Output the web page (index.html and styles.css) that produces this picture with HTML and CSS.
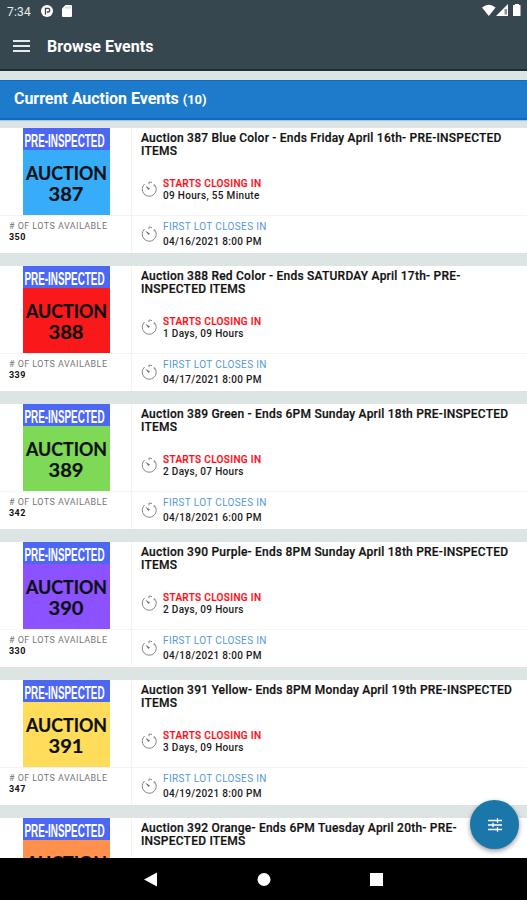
FILE: index.html
```html
<!DOCTYPE html>
<html lang="en">
<head>
<meta charset="utf-8">
<title>Browse Events</title>
<link rel="stylesheet" href="styles.css">
</head>
<body>
<svg class="defs" aria-hidden="true">
  <symbol id="timer" viewBox="0 0 16 16">
    <path d="M3.600 3A7 7 0 1 0 13.400 3.500M13.200 3.500V5.500M8 1V3.200M8 1A7 7 0 0 1 11 1.700" fill="none" stroke="#858585" stroke-width="1"/>
    <path d="M4.300 4.800 9 7.400 7.400 9Z" fill="#6f6f6f"/>
  </symbol>
</svg>
<div class="screen">
  <header class="top">
    <div class="status">
      <span class="time">7:34</span>
      <svg class="st-app" viewBox="0 0 12 12"><circle cx="6" cy="6" r="6" fill="#fff"/><path d="M4.500 9.600V3.400H7A1.800 1.800 0 0 1 7 7H6" fill="none" stroke="#37474f" stroke-width="1.300"/></svg>
      <svg class="st-sd" viewBox="0 0 10 12"><path d="M3.500 0H9Q10 0 10 1V11Q10 12 9 12H1Q0 12 0 11V3.600Z" fill="#fff"/><path d="M4 1.600V3.600M6 1.600V3.600M8 1.600V3.600" stroke="#9aa3a8" stroke-width=".8"/></svg>
      <span class="spacer"></span>
      <svg class="st-net" viewBox="0 0 42 14"><path d="M0 3.600Q6.800-2 13.600 3.600L6.800 12Z" fill="#fff"/><path d="M14 12 26 0V12Z" fill="#fff"/><path d="M22.500 5H25V10.500H22.500Z" fill="#89939a"/><path d="M33 0H37V1H38.500V12H31V1H33Z" fill="#fff"/></svg>
    </div>
    <div class="bar">
      <span class="menu"><i></i><i></i><i></i></span>
      <h1>Browse Events</h1>
    </div>
  </header>
  <div class="section"><h2>Current Auction Events <small>(10)</small></h2></div>
  <main class="list">
    <article class="card">
      <div class="thumb blue"><svg viewBox="0 0 87 87"><text class="pre" x="1.500" y="19.300" textLength="80" lengthAdjust="spacingAndGlyphs">PRE-INSPECTED</text><text class="auc" x="3" y="52" textLength="81" lengthAdjust="spacingAndGlyphs">AUCTION</text><text class="num" x="25.500" y="73" textLength="35" lengthAdjust="spacingAndGlyphs">387</text></svg></div>
      <div class="info"><h3>Auction 387 Blue Color - Ends Friday April 16th- PRE-INSPECTED<br>ITEMS</h3><div class="when"><svg><use href="#timer"/></svg><p><b class="red">STARTS CLOSING IN</b><span class="left">09 Hours, 55 Minute</span></p></div></div>
      <div class="lots"><span>#&nbsp;OF LOTS AVAILABLE</span><b>350</b></div>
      <div class="closes"><svg><use href="#timer"/></svg><p><span class="first">FIRST LOT CLOSES IN</span><span class="date">04/16/2021 8:00 PM</span></p></div>
    </article>
    <article class="card">
      <div class="thumb crimson"><svg viewBox="0 0 87 87"><text class="pre" x="1.500" y="19.300" textLength="80" lengthAdjust="spacingAndGlyphs">PRE-INSPECTED</text><text class="auc" x="3" y="52" textLength="81" lengthAdjust="spacingAndGlyphs">AUCTION</text><text class="num" x="25.500" y="73" textLength="35" lengthAdjust="spacingAndGlyphs">388</text></svg></div>
      <div class="info"><h3>Auction 388 Red Color - Ends SATURDAY April 17th- PRE-<br>INSPECTED ITEMS</h3><div class="when"><svg><use href="#timer"/></svg><p><b class="red">STARTS CLOSING IN</b><span class="left">1 Days, 09 Hours</span></p></div></div>
      <div class="lots"><span>#&nbsp;OF LOTS AVAILABLE</span><b>339</b></div>
      <div class="closes"><svg><use href="#timer"/></svg><p><span class="first">FIRST LOT CLOSES IN</span><span class="date">04/17/2021 8:00 PM</span></p></div>
    </article>
    <article class="card">
      <div class="thumb green"><svg viewBox="0 0 87 87"><text class="pre" x="1.500" y="19.300" textLength="80" lengthAdjust="spacingAndGlyphs">PRE-INSPECTED</text><text class="auc" x="3" y="52" textLength="81" lengthAdjust="spacingAndGlyphs">AUCTION</text><text class="num" x="25.500" y="73" textLength="35" lengthAdjust="spacingAndGlyphs">389</text></svg></div>
      <div class="info"><h3>Auction 389 Green - Ends 6PM Sunday April 18th PRE-INSPECTED<br>ITEMS</h3><div class="when"><svg><use href="#timer"/></svg><p><b class="red">STARTS CLOSING IN</b><span class="left">2 Days, 07 Hours</span></p></div></div>
      <div class="lots"><span>#&nbsp;OF LOTS AVAILABLE</span><b>342</b></div>
      <div class="closes"><svg><use href="#timer"/></svg><p><span class="first">FIRST LOT CLOSES IN</span><span class="date">04/18/2021 6:00 PM</span></p></div>
    </article>
    <article class="card">
      <div class="thumb purple"><svg viewBox="0 0 87 87"><text class="pre" x="1.500" y="19.300" textLength="80" lengthAdjust="spacingAndGlyphs">PRE-INSPECTED</text><text class="auc" x="3" y="52" textLength="81" lengthAdjust="spacingAndGlyphs">AUCTION</text><text class="num" x="25.500" y="73" textLength="35" lengthAdjust="spacingAndGlyphs">390</text></svg></div>
      <div class="info"><h3>Auction 390 Purple- Ends 8PM Sunday April 18th PRE-INSPECTED<br>ITEMS</h3><div class="when"><svg><use href="#timer"/></svg><p><b class="red">STARTS CLOSING IN</b><span class="left">2 Days, 09 Hours</span></p></div></div>
      <div class="lots"><span>#&nbsp;OF LOTS AVAILABLE</span><b>330</b></div>
      <div class="closes"><svg><use href="#timer"/></svg><p><span class="first">FIRST LOT CLOSES IN</span><span class="date">04/18/2021 8:00 PM</span></p></div>
    </article>
    <article class="card">
      <div class="thumb yellow"><svg viewBox="0 0 87 87"><text class="pre" x="1.500" y="19.300" textLength="80" lengthAdjust="spacingAndGlyphs">PRE-INSPECTED</text><text class="auc" x="3" y="52" textLength="81" lengthAdjust="spacingAndGlyphs">AUCTION</text><text class="num" x="25.500" y="73" textLength="35" lengthAdjust="spacingAndGlyphs">391</text></svg></div>
      <div class="info"><h3>Auction 391 Yellow- Ends 8PM Monday April 19th PRE-INSPECTED<br>ITEMS</h3><div class="when"><svg><use href="#timer"/></svg><p><b class="red">STARTS CLOSING IN</b><span class="left">3 Days, 09 Hours</span></p></div></div>
      <div class="lots"><span>#&nbsp;OF LOTS AVAILABLE</span><b>347</b></div>
      <div class="closes"><svg><use href="#timer"/></svg><p><span class="first">FIRST LOT CLOSES IN</span><span class="date">04/19/2021 8:00 PM</span></p></div>
    </article>
    <article class="card">
      <div class="thumb orange"><svg viewBox="0 0 87 87"><text class="pre" x="1.500" y="19.300" textLength="80" lengthAdjust="spacingAndGlyphs">PRE-INSPECTED</text><text class="auc" x="3" y="52" textLength="81" lengthAdjust="spacingAndGlyphs">AUCTION</text></svg></div>
      <div class="info"><h3>Auction 392 Orange- Ends 6PM Tuesday April 20th- PRE-<br>INSPECTED ITEMS</h3></div>
    </article>
  </main>
  <nav class="nav">
    <svg viewBox="0 0 527 42"><path d="M144 21.500 157 14.500V28.500Z" fill="#fff"/><circle cx="264" cy="21.500" r="6.500" fill="#fff"/><rect x="370" y="15" width="13" height="13" fill="#fff"/></svg>
  </nav>
  <button class="fab" aria-label="Filter"><svg viewBox="0 0 16 16"><path d="M1 3.500H15M1 8H15M1 12.500H15M10.500 1.200V5.800M6 5.700V10.300M10.500 10.200V14.800" stroke="#fff" stroke-width="1.300" fill="none"/></svg></button>
</div>
</body>
</html>
```
FILE: styles.css
```css
* { box-sizing: border-box; }
body { margin: 0; font-family: Roboto, "Liberation Sans", sans-serif; background: #dce5e3; }
h1, h2, h3, p { margin: 0; }
svg { display: block; flex: none; }
.defs { display: none; }
.screen { position: relative; display: flex; flex-direction: column; width: 527px; height: 900px; overflow: hidden; }

.top { flex: none; height: 71px; background: #37474f; border-bottom: 2px solid #17303a; color: #fff; }
.status { display: flex; align-items: flex-start; height: 23px; padding: 5px 0 0 7px; }
.time { width: 34px; font-size: 12px; line-height: 14px; letter-spacing: .2px; color: #e8ecee; }
.st-app { width: 12px; height: 12px; }
.st-sd { width: 10px; height: 12px; margin-left: 9px; }
.spacer { flex: 1; }
.st-net { width: 42px; height: 14px; margin-right: 3px; margin-top: -1px; }
.bar { display: flex; align-items: center; height: 46px; padding-left: 13px; }
.menu { display: flex; flex-direction: column; gap: 3px; width: 17px; }
.menu i { height: 2px; background: #e6eaec; }
h1 { margin-left: 17px; padding-top: 1px; font-size: 16px; line-height: 20px; font-weight: 700; letter-spacing: .08px; }

.section { flex: none; height: 40px; margin-top: 9px; padding: 8px 14px 0; background: #1e7bcc; border: solid #0f6cc6; border-width: 1px 0 2px; color: #fff; box-shadow: 0 1px 1px #a9c5dc; }
h2 { font-size: 16px; line-height: 20px; font-weight: 700; letter-spacing: -.04px; white-space: nowrap; }
h2 small { font-size: 13px; }

.list { display: flex; flex-direction: column; gap: 13px; height: 738px; min-height: 0; flex: 1; padding-top: 8px; overflow: hidden; }
.card { flex: none; display: grid; grid-template: 87px 38px / 132px 1fr; height: 125px; background: #fff; }
.thumb { width: 87px; height: 87px; margin-left: 23px; }
.thumb svg { width: 87px; height: 87px; }
.blue { background: linear-gradient(#4d67f5 22px, #37adf9 22px); }
.crimson { background: linear-gradient(#4d67f5 22px, #f9191b 22px); }
.green { background: linear-gradient(#4d67f5 22px, #7dd956 22px); }
.purple { background: linear-gradient(#4d67f5 22px, #8c52ff 22px); }
.yellow { background: linear-gradient(#4d67f5 22px, #ffdc59 22px); }
.orange { background: linear-gradient(#4d67f5 22px, #ff914d 22px); }
.pre { font: 700 17.500px "Liberation Sans", sans-serif; fill: #fff; }
.auc { font: 700 18px Lato, sans-serif; fill: #0c1015; stroke: #0c1015; stroke-width: .2px; }
.num { font: 700 19px Lato, sans-serif; fill: #0c1015; stroke: #0c1015; stroke-width: .2px; }
.info { border-left: 1px solid #f2f3f3; margin-left: -1px; padding: 3px 0 0 9px; }
h3 { height: 47px; padding-top: 1px; font-size: 12px; line-height: 13px; font-weight: 500; letter-spacing: .22px; color: #111; -webkit-text-stroke: .2px #111; white-space: nowrap; }
.when, .closes { display: flex; }
.when p, .closes p { display: flex; flex-direction: column; margin-left: 6px; white-space: nowrap; }
.when svg, .closes svg { width: 16px; height: 16px; margin-top: 3px; }
.red { font-size: 10px; line-height: 12px; font-weight: 500; letter-spacing: .35px; color: #fb1018; -webkit-text-stroke: .2px #fb1018; }
.left, .date { font-size: 10px; line-height: 12px; font-weight: 500; letter-spacing: .32px; color: #1a1a1a; }
.lots { display: flex; flex-direction: column; padding: 5px 0 0 9px; border-top: 1px solid #f2f3f3; font-size: 9px; line-height: 11px; color: #777; white-space: nowrap; }
.lots span { letter-spacing: .43px; }
.lots b { color: #111; letter-spacing: .4px; }
.closes { margin-left: -1px; padding: 4px 0 0 9px; border: solid #f2f3f3; border-width: 1px 0 0 1px; }
.closes svg { margin-top: 6px; }
.first { font-size: 10px; line-height: 13px; letter-spacing: .36px; color: #5599d5; }
.date { line-height: 17px; }

.nav { flex: none; height: 42px; background: #000; }
.nav svg { width: 527px; height: 42px; }
.fab { position: absolute; left: 470px; top: 800px; display: flex; align-items: center; justify-content: center; width: 49px; height: 49px; padding: 0; border: 0; border-radius: 50%; background: #1b76aa; box-shadow: 0 2px 5px rgba(0, 0, 0, .4); }
.fab svg { width: 16px; height: 16px; }
```
